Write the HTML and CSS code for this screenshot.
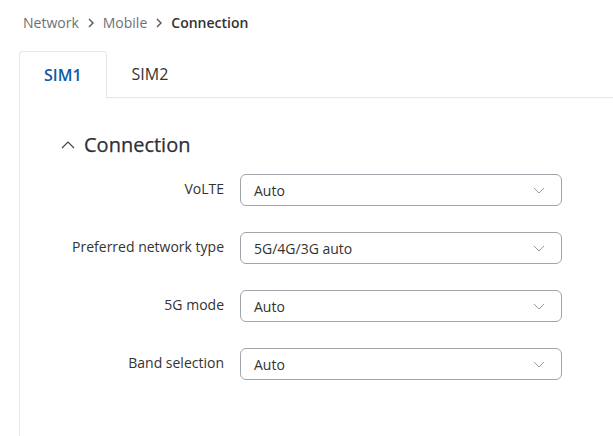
FILE: index.html
```html
<!DOCTYPE html>
<html lang="en">
<head>
  <meta charset="UTF-8">
  <meta name="viewport" content="width=device-width, initial-scale=1.0">
  <title>Mobile Connection</title>
  <link rel="stylesheet" href="styles.css">
</head>
<body>
<!-- Breadcrumb -->
<nav class="breadcrumb">
  <span>Network</span>
  <svg class="crumb-sep" width="8" height="10" viewBox="0 0 8 10"><path d="M2 1l4 4-4 4" fill="none" stroke="#555" stroke-width="1.4"/></svg>
  <span>Mobile</span>
  <svg class="crumb-sep" width="8" height="10" viewBox="0 0 8 10"><path d="M2 1l4 4-4 4" fill="none" stroke="#555" stroke-width="1.4"/></svg>
  <span class="current">Connection</span>
</nav>

<!-- SIM tabs -->
<div class="tabs">
  <div class="tab active">SIM1</div>
  <div class="tab">SIM2</div>
  <div class="tab-fill"></div>
</div>

<div class="panel">
  <div class="section-title">
    <svg width="14" height="8" viewBox="0 0 14 8"><path d="M1 7l6-6 6 6" fill="none" stroke="#444" stroke-width="1.2"/></svg>
    <span>Connection</span>
  </div>

  <form class="settings">
    <div class="row">
      <label for="volte">VoLTE</label>
      <div class="select"><span id="volte">Auto</span><svg width="12" height="7" viewBox="0 0 12 7"><path d="M1 1l5 5 5-5" fill="none" stroke="#9a9aa2" stroke-width="1"/></svg></div>
    </div>
    <div class="row">
      <label for="nettype">Preferred network type</label>
      <div class="select"><span id="nettype">5G/4G/3G auto</span><svg width="12" height="7" viewBox="0 0 12 7"><path d="M1 1l5 5 5-5" fill="none" stroke="#9a9aa2" stroke-width="1"/></svg></div>
    </div>
    <div class="row">
      <label for="mode5g">5G mode</label>
      <div class="select"><span id="mode5g">Auto</span><svg width="12" height="7" viewBox="0 0 12 7"><path d="M1 1l5 5 5-5" fill="none" stroke="#9a9aa2" stroke-width="1"/></svg></div>
    </div>
    <div class="row">
      <label for="band">Band selection</label>
      <div class="select"><span id="band">Auto</span><svg width="12" height="7" viewBox="0 0 12 7"><path d="M1 1l5 5 5-5" fill="none" stroke="#9a9aa2" stroke-width="1"/></svg></div>
    </div>
  </form>
</div>
</body>
</html>
```

FILE: styles.css
```css
body {
  font-family: "Open Sans", Arial, sans-serif;
  margin: 0;
  padding: 0;
  background-color: #fff;
  color: #333;
  overflow: hidden;
}

.breadcrumb {
  display: flex;
  align-items: center;
  gap: 8px;
  padding: 12px 0 0 23px;
  height: 21px;
  font-size: 14px;
  color: #6f6f73;
}

.breadcrumb .current {
  color: #333;
  font-weight: 600;
}

.crumb-sep {
  margin-top: 1px;
}

/* Tabs */
.tabs {
  display: flex;
  margin: 18px 0 0 19px;
  height: 47px;
}

.tab {
  padding: 0 25px;
  font-size: 16px;
  line-height: 47px;
  color: #333;
  border-bottom: 1px solid #e3e6ea;
}

.tab.active {
  color: #0f5aa6;
  font-weight: 600;
  border: 1px solid #e3e6ea;
  border-bottom: none;
  border-radius: 4px 4px 0 0;
  padding: 0 24px;
  height: 47px;
}

.tab-fill {
  flex: 1;
  border-bottom: 1px solid #e3e6ea;
}

.panel {
  box-sizing: border-box;
  margin-left: 19px;
  border-left: 1px solid #e3e6ea;
  height: 338px;
  padding-top: 32px;
}

.section-title {
  display: flex;
  align-items: center;
  gap: 9px;
  padding-left: 41px;
  height: 28px;
  font-size: 20px;
  font-weight: 500;
  color: #2f2f38;
  -webkit-text-stroke: 0.25px #2f2f38;
}

.section-title svg {
  margin-top: 1px;
}

.settings {
  padding-top: 16px;
}

.row {
  display: flex;
  align-items: center;
  margin-bottom: 26px;
}

.row label {
  width: 204px;
  text-align: right;
  font-size: 14px;
  color: #333;
  margin-right: 16px;
  margin-top: -3px;
}

.select {
  box-sizing: border-box;
  width: 322px;
  height: 32px;
  display: flex;
  align-items: center;
  justify-content: space-between;
  padding: 0 16px 0 13px;
  border: 1px solid #a3a3ab;
  border-radius: 6px;
  font-size: 14px;
  color: #333;
}

.select span {
  margin-top: 1px;
}
```
